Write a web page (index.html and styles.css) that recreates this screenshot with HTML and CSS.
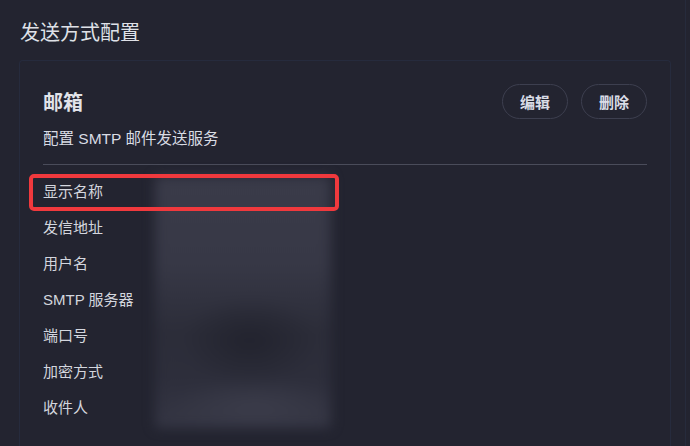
FILE: index.html
```html
<!DOCTYPE html>
<html lang="zh-CN">
<head>
<meta charset="utf-8">
<title>发送方式配置</title>
<link rel="stylesheet" href="styles.css">
</head>
<body>
<div class="page">
  <h1 class="page-title">发送方式配置</h1>
  <section class="card">
    <div class="card-head">
      <h2 class="card-title">邮箱</h2>
      <div class="actions">
        <button class="pill">编辑</button>
        <button class="pill">删除</button>
      </div>
    </div>
    <p class="card-desc">配置 SMTP 邮件发送服务</p>
    <hr class="divider">
    <div class="fields">
      <div class="label">显示名称</div>
      <div class="label">发信地址</div>
      <div class="label">用户名</div>
      <div class="label">SMTP 服务器</div>
      <div class="label">端口号</div>
      <div class="label">加密方式</div>
      <div class="label">收件人</div>
      <div class="values"><div class="blur"></div></div>
      <div class="highlight"></div>
    </div>
  </section>
</div>
</body>
</html>
```
FILE: styles.css
```css
* { box-sizing: border-box; }
html, body {
  margin: 0;
  background: #232430;
  height: 100%;
  overflow: hidden;
}
body {
  font-family: "Liberation Sans", "Noto Sans CJK SC", sans-serif;
  color: #d9dce4;
}
.page {
  width: 686px;
  height: 446px;
  border-right: 1px solid #262b3c;
  padding: 19px 0 0 19px;
}
.page-title {
  margin: 0 0 13px 1px;
  font-size: 20px;
  line-height: 28px;
  font-weight: 400;
  color: #dfe1e7;
}
.card {
  width: 652px;
  border: 1px solid #262b3d;
  border-bottom: none;
  border-radius: 4px 4px 0 0;
  padding: 23px 23px 0 23px;
  height: 400px;
}
.card-head {
  display: flex;
  align-items: center;
  justify-content: space-between;
  height: 35px;
}
.card-title {
  margin: 0;
  font-size: 20px;
  font-weight: 700;
  color: #e1e3e9;
}
.actions {
  display: flex;
  gap: 13px;
}
.pill {
  height: 35px;
  width: 66px;
  border: 1px solid #3d3f4f;
  border-radius: 18px;
  background: transparent;
  color: #d9dce6;
  font-family: "Noto Sans CJK SC", sans-serif;
  font-size: 15px;
  font-weight: 700;
  padding: 0;
}
.card-desc {
  margin: 10px 0 0 0;
  font-size: 15.5px;
  line-height: 20px;
  color: #d9dce4;
}
.divider {
  margin: 15px 0 0 0;
  border: none;
  border-top: 1px solid #4a4c5a;
  height: 0;
}
.fields {
  position: relative;
  display: grid;
  grid-template-columns: 112px 1fr;
  grid-auto-rows: 36px;
  margin-top: 9px;
}
.label {
  grid-column: 1;
  font-size: 15px;
  line-height: 36px;
  color: #d3d6de;
}
.values {
  grid-column: 2;
  grid-row: 1 / span 7;
  padding-top: 2px;
}
.blur {
  width: 176px;
  height: 252px;
  background:
    radial-gradient(ellipse 70px 45px at 95px 165px, #22232e 0%, rgba(34,35,46,0) 100%),
    radial-gradient(ellipse 90px 30px at 100px 232px, #3b3c4a 0%, rgba(59,60,74,0) 100%),
    linear-gradient(180deg, #3a3b49 0%, #373846 35%, #2c2d39 62%, #2d2e3b 80%, #353644 100%);
  filter: blur(6px);
  border-radius: 4px;
}
.highlight {
  position: absolute;
  left: -14px;
  top: 0;
  width: 310px;
  height: 37px;
  border: 4px solid #f0393d;
  border-radius: 5px;
}
```
